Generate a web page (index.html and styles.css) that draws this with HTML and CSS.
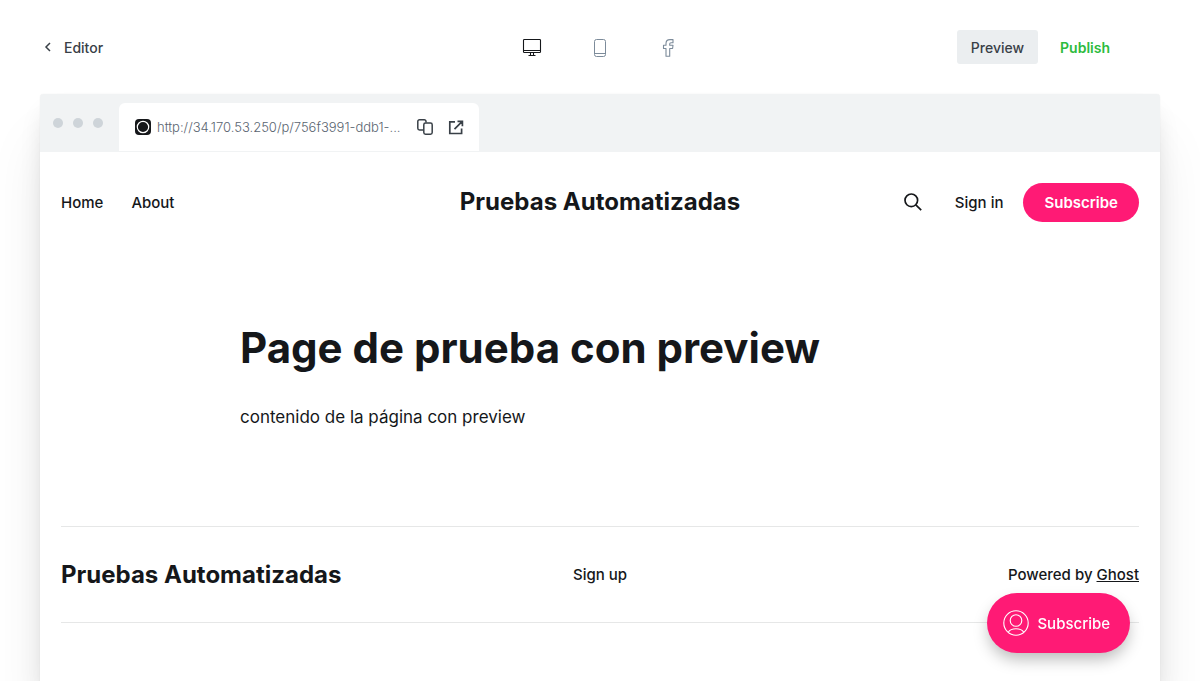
FILE: index.html
```html
<!DOCTYPE html>
<html lang="es">
<head>
<meta charset="utf-8">
<meta name="viewport" content="width=device-width, initial-scale=1">
<title>Preview - Page de prueba con preview</title>
<link rel="stylesheet" href="styles.css">
</head>
<body>
<header class="toolbar">
  <button class="back" type="button">
    <svg width="8" height="10" viewBox="0 0 8 10" fill="none" stroke="currentColor" stroke-width="1.5"><path d="M6 1 2 5l4 4"/></svg>
    Editor
  </button>
  <div class="devices">
    <button class="device active" type="button" aria-label="Desktop">
      <svg width="20" height="20" viewBox="0 0 20 20" fill="none" stroke="currentColor" stroke-width="1.1"><rect x="1.500" y="1.500" width="17" height="13" rx=".8"/><path d="M1.500 12.500h17M8.500 14.500v3M11.500 14.500v3M6.500 17.500h7"/></svg>
    </button>
    <button class="device" type="button" aria-label="Mobile">
      <svg width="20" height="20" viewBox="0 0 20 20" fill="none" stroke="currentColor" stroke-width="1"><rect x="4.500" y="1.500" width="11" height="17" rx="2"/><path d="M4.500 15.500h11"/></svg>
    </button>
    <button class="device" type="button" aria-label="Facebook">
      <svg width="20" height="20" viewBox="0 0 20 20" fill="none" stroke="currentColor" stroke-width="1.100" stroke-linejoin="round"><path d="M8 18.300V10.500H5.500V7.300H8V5.500C8 3 9.500 1.600 12 1.600h3v3.100h-2c-1 0-1.300.5-1.300 1.300v1.300H15l-.4 3.200h-2.900v7.800z"/></svg>
    </button>
  </div>
  <div class="actions">
    <button class="preview" type="button">Preview</button>
    <button class="publish" type="button">Publish</button>
  </div>
</header>

<main class="window">
  <div class="chrome">
    <div class="dots"><span class="dot"></span><span class="dot"></span><span class="dot"></span></div>
    <div class="tab">
      <svg class="favicon" width="16" height="16" viewBox="0 0 16 16"><rect width="16" height="16" rx="4" fill="#15171a"/><circle cx="8" cy="8" r="5.700" fill="none" stroke="#fff" stroke-width="1.200"/></svg>
      <span class="url">http://34.170.53.250/p/756f3991-ddb1-...</span>
      <button class="tool" type="button" aria-label="Copy link">
        <svg width="16" height="16" viewBox="0 0 16 16" fill="none" stroke="currentColor" stroke-width="1.500"><path d="M6.500 11H2.500A1.700 1.700 0 0 1 .8 9.300V2.500A1.700 1.700 0 0 1 2.500.8h4.800A1.700 1.700 0 0 1 9 2.500V3.500"/><rect x="6.800" y="4" width="8.400" height="11.200" rx="1.700"/></svg>
      </button>
      <button class="tool" type="button" aria-label="Open in new tab">
        <svg width="16" height="16" viewBox="0 0 16 16" fill="none" stroke="currentColor" stroke-width="1.700"><path d="M7 2.800H1.800v11.700h11.800V9.500M9.500 2.300h4.900v4.900M14 2.700 6.500 10.200"/></svg>
      </button>
    </div>
  </div>

  <div class="site">
    <header class="site-header">
      <nav class="nav"><a href="#">Home</a><a href="#">About</a></nav>
      <a class="brand" href="#">Pruebas Automatizadas</a>
      <div class="member">
        <button class="search" type="button" aria-label="Search">
          <svg width="20" height="20" viewBox="0 0 20 20" fill="none" stroke="currentColor" stroke-width="1.700"><circle cx="8.300" cy="8.300" r="6.300"/><path d="m12.800 12.800 5.400 5.400"/></svg>
        </button>
        <a href="#">Sign in</a>
        <a class="subscribe" href="#">Subscribe</a>
      </div>
    </header>
    <article class="article">
      <h1 class="title">Page de prueba con preview</h1>
      <p class="text">contenido de la página con preview</p>
    </article>
    <footer class="footer">
      <a class="brand" href="#">Pruebas Automatizadas</a>
      <a class="signup" href="#">Sign up</a>
      <span class="powered">Powered by <a class="ghost" href="#">Ghost</a></span>
    </footer>
  </div>
</main>

<button class="portal" type="button">
  <svg width="26" height="26" viewBox="0 0 26 26" fill="none" stroke="currentColor" stroke-width="1.100"><circle cx="13" cy="13" r="12.200"/><circle cx="13" cy="10.500" r="5.800"/><path d="M5.300 22.300c1.500-2.500 4.300-3.500 7.700-3.500s6.200 1 7.700 3.500"/></svg>
  Subscribe
</button>
</body>
</html>
```
FILE: styles.css
```css
* {
  box-sizing: border-box;
}

body {
  display: flex;
  flex-direction: column;
  min-height: 100vh;
  margin: 0;
  background: #fff;
  color: #15171a;
  font-family: Inter, "Liberation Sans", sans-serif;
}

button {
  padding: 0;
  border: 0;
  background: none;
  color: inherit;
  font: inherit;
  cursor: pointer;
}

a {
  color: inherit;
  text-decoration: none;
}

svg {
  display: block;
  flex: none;
}

.toolbar {
  display: grid;
  grid-template-columns: 1fr auto 1fr;
  align-items: center;
  flex: none;
  padding: 30px 40px;
}

.back {
  display: flex;
  align-items: center;
  justify-self: start;
  gap: 12px;
  padding-left: 4px;
  color: #394047;
  font-size: 14px;
  font-weight: 500;
}

.devices {
  display: flex;
  gap: 48px;
  padding-top: 2px;
  color: #7c8b9a;
}

.device.active {
  color: #15171a;
}

.actions {
  display: flex;
  justify-self: end;
  padding-right: 36px;
  font-size: 14px;
}

.preview,
.publish {
  height: 34px;
  padding: 0 14px;
  border-radius: 3px;
}

.preview {
  margin-right: 8px;
  background: #ebeef0;
  color: #394047;
  font-weight: 500;
}

.publish {
  color: #2dbb3d;
  font-weight: 600;
}

.window {
  display: flex;
  flex-direction: column;
  flex: 1;
  margin: 0 40px;
  border-radius: 4px 4px 0 0;
  background: #fff;
  box-shadow: 0 0 1px rgba(0, 0, 0, 0.15), 0 16px 24px -6px rgba(0, 0, 0, 0.14), 0 48px 56px rgba(0, 0, 0, 0.08);
  clip-path: inset(-40px -40px 0);
}

.chrome {
  display: flex;
  align-items: flex-end;
  flex: none;
  gap: 16px;
  height: 58px;
  padding: 0 13px 1px;
  border-radius: 4px 4px 0 0;
  background: #f1f3f4;
}

.dots {
  display: flex;
  gap: 10px;
  padding-bottom: 23px;
}

.dot {
  width: 10px;
  height: 10px;
  border-radius: 50%;
  background: #ced4d9;
}

.tab {
  display: flex;
  align-items: center;
  width: 360px;
  height: 48px;
  padding: 0 15px 0 16px;
  border-radius: 6px 6px 0 0;
  background: #fff;
}

.url {
  flex: 1;
  margin-left: 6px;
  color: #5a6570;
  font-size: 13px;
  font-weight: 300;
  white-space: nowrap;
}

.tool {
  margin-left: 4px;
  color: #394047;
}

.tool + .tool {
  margin-left: 15px;
}

.site {
  padding: 0 21px;
  font-size: 15px;
  font-weight: 500;
}

.site-header {
  display: grid;
  grid-template-columns: 1fr auto 1fr;
  align-items: center;
  height: 100px;
}

.nav {
  display: flex;
  gap: 28px;
}

.brand {
  font-size: 24px;
  font-weight: 700;
  line-height: 28px;
}

.member {
  display: flex;
  align-items: center;
  justify-content: flex-end;
  gap: 20px;
}

.search {
  margin-right: 12px;
}

.subscribe {
  padding: 0 21px;
  border-radius: 20px;
  background: #ff1a75;
  color: #fff;
  font-weight: 600;
  line-height: 39px;
}

.article {
  max-width: 720px;
  margin: 0 auto;
  padding: 70px 0 96px;
}

.title {
  margin: 0;
  font-size: 42px;
  font-weight: 700;
  line-height: 52px;
}

.text {
  margin: 30px 0 0;
  font-size: 17px;
  font-weight: 400;
  line-height: 26px;
}

.footer {
  display: grid;
  grid-template-columns: 1fr auto 1fr;
  align-items: center;
  height: 97px;
  border: solid #e6e7e7;
  border-width: 1px 0;
}

.powered {
  justify-self: end;
}

.ghost {
  text-decoration: underline;
}

.portal {
  position: fixed;
  right: 70px;
  bottom: 28px;
  display: flex;
  align-items: center;
  gap: 8px;
  height: 60px;
  padding: 0 20px 0 16px;
  border-radius: 30px;
  background: #ff1a75;
  box-shadow: 0 8px 16px -2px rgba(0, 0, 0, 0.28);
  color: #fff;
  font-size: 15px;
  font-weight: 500;
}
```
